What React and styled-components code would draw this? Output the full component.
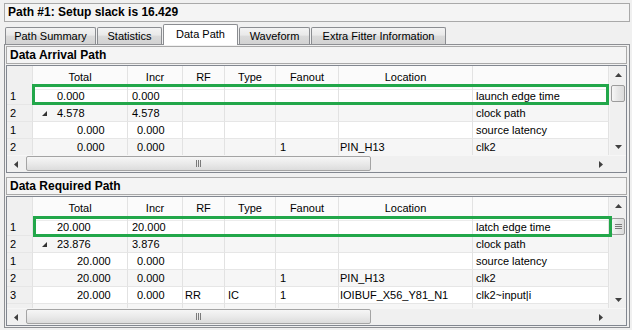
import React from 'react';
import styled, { createGlobalStyle } from 'styled-components';

const GlobalStyle = createGlobalStyle`
  html, body {
    margin: 0;
    padding: 0;
    background: #f0f0f0;
  }
  body {
    font-family: "Liberation Sans", Arial, sans-serif;
    font-size: 11px;
    color: #000;
  }
  * { box-sizing: border-box; }
`;

const COLS = '26px 95px 55px 42px 51px 63px 134px 136px';

const Window = styled.div`
  width: 632px;
  height: 330px;
  padding: 3px 2px 2px 4px;
  display: flex;
  flex-direction: column;
`;

const TitleBox = styled.div`
  height: 19px;
  border: 1px solid #a9a9a9;
  background: #f4f4f4;
  font-weight: bold;
  font-size: 12px;
  line-height: 17px;
  padding-left: 3px;
`;

const TabStrip = styled.div`
  margin-top: 2px;
  height: 20px;
  padding-left: 1px;
  display: flex;
  align-items: flex-end;
  gap: 1px;
  position: relative;
  z-index: 1;
`;

const Tab = styled.div`
  width: ${p => p.$w}px;
  height: ${p => (p.$active ? 21 : 17)}px;
  margin-bottom: ${p => (p.$active ? -1 : 0)}px;
  border: 1px solid #8b8d91;
  border-bottom: none;
  border-radius: 2px 2px 0 0;
  background: ${p => (p.$active ? '#fff' : 'linear-gradient(#f3f3f3, #e9e9e9 45%, #dadada 50%, #d2d2d2)')};
  font-size: 11px;
  line-height: ${p => (p.$active ? 19 : 17)}px;
  text-align: center;
  white-space: nowrap;
`;

const Panel = styled.div`
  height: 284px;
  border: 1px solid #8d8f93;
  background: #f0f0f0;
  padding: 1px 2px 1px 1px;
  display: flex;
  flex-direction: column;
`;

const SectionTitle = styled.div`
  height: 18px;
  margin-top: ${p => p.$gap}px;
  border: 1px solid #a9a9a9;
  background: #f4f4f4;
  font-weight: bold;
  font-size: 12px;
  line-height: 16px;
  padding-left: 3px;
`;

const Grid = styled.div`
  margin-top: 1px;
  border: 1px solid #828790;
  background: #fff;
  display: flex;
  flex-direction: column;
  ${p => (p.$grow ? 'flex: 1; min-height: 0;' : '')}
`;

const Body = styled.div`
  position: relative;
  display: flex;
  height: ${p => (p.$h ? `${p.$h}px` : 'auto')};
  ${p => (p.$h ? '' : 'flex: 1; min-height: 0;')}
`;

const DataArea = styled.div`
  width: 602px;
  overflow: hidden;
`;

const HeaderRow = styled.div`
  display: grid;
  grid-template-columns: ${COLS};
  height: 22px;
  background: #fbfbfb;
`;

const HeaderCell = styled.div`
  border-right: 1px solid #e3e3e3;
  border-bottom: 1px solid #ececec;
  text-align: center;
  line-height: 23px;
  background: ${p => (p.$num ? '#f0f0f0' : 'transparent')};
`;

const Row = styled.div`
  display: grid;
  grid-template-columns: ${COLS};
  height: 17px;
  background: ${p => (p.$alt ? '#f6f6f6' : '#fff')};
`;

const Cell = styled.div`
  position: relative;
  border-right: 1px solid #e2e2e2;
  border-bottom: 1px solid #e6e6e6;
  line-height: 16px;
  padding-left: ${p => p.$pad ?? 3}px;
  white-space: nowrap;
  overflow: hidden;
  background: ${p => (p.$num ? '#f0f0f0' : 'transparent')};
`;

const Expander = styled.svg`
  position: absolute;
  left: 9px;
  top: 6px;
`;

const Highlight = styled.div`
  position: absolute;
  border: 3px solid #22a74a;
  pointer-events: none;
  z-index: 2;
`;

const VScroll = styled.div`
  position: relative;
  width: 17px;
  background: #f0f0f0;
  border-left: 1px solid #f4f4f4;
`;

const ArrowBox = styled.div`
  position: absolute;
  left: 0;
  right: 0;
  ${p => p.$side}: 0;
  height: 17px;
  display: flex;
  align-items: center;
  justify-content: center;
`;

const VThumb = styled.div`
  position: absolute;
  left: 1px;
  width: 14px;
  border: 1px solid #9c9c9c;
  border-radius: 2px;
  background: linear-gradient(90deg, #f6f6f6, #e6e6e6 50%, #dcdcdc);
  display: flex;
  align-items: center;
  justify-content: center;
`;

const HScroll = styled.div`
  display: flex;
  height: 17px;
  background: #f0f0f0;
  border-top: 1px solid #f6f6f6;
`;

const HTrack = styled.div`
  position: relative;
  width: 602px;
`;

const HArrow = styled.div`
  position: absolute;
  top: 0;
  bottom: 0;
  ${p => p.$side}: 0;
  width: 17px;
  display: flex;
  align-items: center;
  justify-content: center;
`;

const HThumb = styled.div`
  position: absolute;
  left: 19px;
  top: 0;
  width: 345px;
  height: 15px;
  border: 1px solid #a4a4a4;
  border-radius: 2px;
  background: linear-gradient(#f6f6f6, #eaeaea 50%, #dcdcdc);
  display: flex;
  align-items: center;
  justify-content: center;
`;

const Corner = styled.div`
  width: 17px;
  background: #f0f0f0;
`;

const arrivalRows = [
  { n: '1', total: '0.000', incr: '0.000', el: 'launch edge time' },
  { n: '2', total: '4.578', incr: '4.578', tree: true, el: 'clock path' },
  { n: '1', total: '0.000', incr: '0.000', lvl: 1, el: 'source latency' },
  { n: '2', total: '0.000', incr: '0.000', lvl: 1, fan: '1', loc: 'PIN_H13', el: 'clk2' },
];

const requiredRows = [
  { n: '1', total: '20.000', incr: '20.000', el: 'latch edge time' },
  { n: '2', total: '23.876', incr: '3.876', tree: true, el: 'clock path' },
  { n: '1', total: '20.000', incr: '0.000', lvl: 1, el: 'source latency' },
  { n: '2', total: '20.000', incr: '0.000', lvl: 1, fan: '1', loc: 'PIN_H13', el: 'clk2' },
  { n: '3', total: '20.000', incr: '0.000', lvl: 1, rf: 'RR', type: 'IC', fan: '1', loc: 'IOIBUF_X56_Y81_N1', el: 'clk2~input|i' },
  { n: '', total: '', incr: '', lvl: 1 },
];

const headers = ['', 'Total', 'Incr', 'RF', 'Type', 'Fanout', 'Location', ''];

const Tri = ({ dir }) => {
  const pts = {
    up: '0,4 3.5,0 7,4',
    down: '0,0 7,0 3.5,4',
    left: '4,0 4,7 0,3.5',
    right: '0,0 0,7 4,3.5',
  }[dir];
  const vertical = dir === 'up' || dir === 'down';
  return (
    <svg width={vertical ? 7 : 4} height={vertical ? 4 : 7}>
      <polygon points={pts} fill="#404040" />
    </svg>
  );
};

function DataGrid({ rows, bodyHeight, grow, mark, thumbTop, grip }) {
  return (
    <Grid $grow={grow}>
      <Body $h={bodyHeight}>
        <DataArea>
          <HeaderRow>
            {headers.map((h, i) => (
              <HeaderCell key={i} $num={i === 0}>{h}</HeaderCell>
            ))}
          </HeaderRow>
          {rows.map((r, i) => (
            <Row key={i} $alt={i % 2 === 1}>
              <Cell $num $pad={3}>{r.n}</Cell>
              <Cell $pad={r.lvl ? 44 : 24}>
                {r.tree && (
                  <Expander width="5" height="5">
                    <polygon points="5,0 5,5 0,5" fill="#333" />
                  </Expander>
                )}
                {r.total}
              </Cell>
              <Cell $pad={r.lvl ? 9 : 4}>{r.incr}</Cell>
              <Cell $pad={2}>{r.rf}</Cell>
              <Cell>{r.type}</Cell>
              <Cell $pad={4}>{r.fan}</Cell>
              <Cell $pad={1}>{r.loc}</Cell>
              <Cell>{r.el}</Cell>
            </Row>
          ))}
        </DataArea>
        <VScroll>
          <ArrowBox $side="top"><Tri dir="up" /></ArrowBox>
          <VThumb style={{ top: thumbTop, height: 17 }}>
            {grip && (
              <svg width="7" height="7">
                <rect x="0" y="1" width="7" height="1" fill="#7a7a7a" />
                <rect x="0" y="3" width="7" height="1" fill="#7a7a7a" />
                <rect x="0" y="5" width="7" height="1" fill="#7a7a7a" />
              </svg>
            )}
          </VThumb>
          <ArrowBox $side="bottom"><Tri dir="down" /></ArrowBox>
        </VScroll>
        <Highlight style={mark} />
      </Body>
      <HScroll>
        <HTrack>
          <HArrow $side="left"><Tri dir="left" /></HArrow>
          <HThumb>
            <svg width="7" height="7">
              <rect x="1" y="0" width="1" height="7" fill="#7a7a7a" />
              <rect x="3" y="0" width="1" height="7" fill="#7a7a7a" />
              <rect x="5" y="0" width="1" height="7" fill="#7a7a7a" />
            </svg>
          </HThumb>
          <HArrow $side="right"><Tri dir="right" /></HArrow>
        </HTrack>
        <Corner />
      </HScroll>
    </Grid>
  );
}

const tabs = [
  { label: 'Path Summary', w: 91 },
  { label: 'Statistics', w: 65 },
  { label: 'Data Path', w: 75, active: true },
  { label: 'Waveform', w: 71 },
  { label: 'Extra Fitter Information', w: 135 },
];

export default function App() {
  return (
    <Window>
      <GlobalStyle />
      <TitleBox>Path #1: Setup slack is 16.429</TitleBox>
      <TabStrip>
        {tabs.map(t => (
          <Tab key={t.label} $w={t.w} $active={t.active}>{t.label}</Tab>
        ))}
      </TabStrip>
      <Panel>
        <SectionTitle $gap={0}>Data Arrival Path</SectionTitle>
        <DataGrid
          rows={arrivalRows}
          bodyHeight={89}
          mark={{ left: 25, top: 18, width: 577, height: 21 }}
          thumbTop={19}
        />
        <SectionTitle $gap={4}>Data Required Path</SectionTitle>
        <DataGrid
          rows={requiredRows}
          grow
          mark={{ left: 26, top: 19, width: 579, height: 21 }}
          thumbTop={21}
          grip
        />
      </Panel>
    </Window>
  );
}
